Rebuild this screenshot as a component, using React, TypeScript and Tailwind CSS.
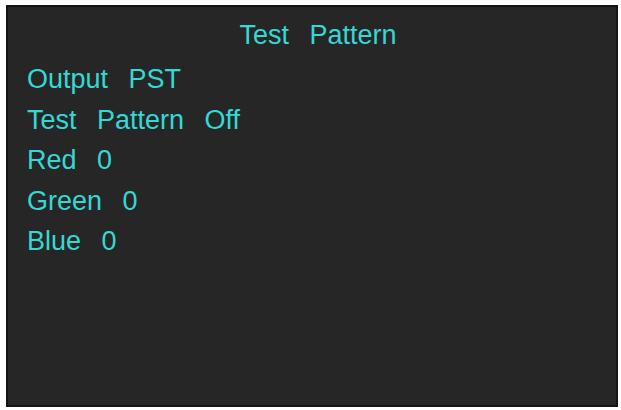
export default function App() {
  const rows = ["Output PST", "Test Pattern Off", "Red 0", "Green 0", "Blue 0"];
  return (
    <div className="w-[621px] h-[410px] bg-white pt-[5px] pl-[6px]">
      <div className="w-[612px] h-[402px] bg-[#262626] border-2 border-[#141414] px-[19px] pt-[8px] text-[#34d8d4] text-[27px] leading-[40px] [word-spacing:13px] font-['Liberation_Sans',Arial,sans-serif]">
        <div className="text-center pl-[12px] mb-[4px]">Test Pattern</div>
        <div className="flex flex-col gap-[0.5px]">
          {rows.map((r) => (
            <div key={r}>{r}</div>
          ))}
        </div>
      </div>
    </div>
  );
}
